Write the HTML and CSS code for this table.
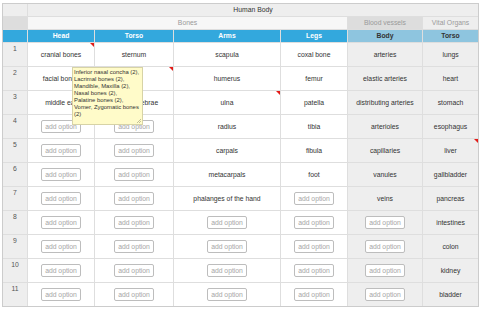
FILE: index.html
```html
<!DOCTYPE html>
<html lang="en">
<head>
  <meta charset="UTF-8" />
  <title>Human Body</title>
  <link rel="stylesheet" href="styles.css">
</head>
<body>
  <div class="sheet">
    <div class="cell top"></div>
    <div class="cell top title">Human Body</div>

    <div class="cell corner"></div>
    <div class="cell group bones">Bones</div>
    <div class="cell group vessels">Blood vessels</div>
    <div class="cell group organs">Vital Organs</div>

    <div class="cell blue"></div>
    <div class="cell blue">Head</div>
    <div class="cell blue">Torso</div>
    <div class="cell blue">Arms</div>
    <div class="cell blue">Legs</div>
    <div class="cell pale">Body</div>
    <div class="cell pale">Torso</div>

    <div class="rh">1</div>
    <div class="cell note">cranial bones</div>
    <div class="cell">sternum</div>
    <div class="cell">scapula</div>
    <div class="cell">coxal bone</div>
    <div class="cell grey">arteries</div>
    <div class="cell grey">lungs</div>

    <div class="rh">2</div>
    <div class="cell">facial bones</div>
    <div class="cell note">ribs</div>
    <div class="cell">humerus</div>
    <div class="cell">femur</div>
    <div class="cell grey">elastic arteries</div>
    <div class="cell grey">heart</div>

    <div class="rh">3</div>
    <div class="cell">middle ear</div>
    <div class="cell">spinal vertebrae</div>
    <div class="cell note">ulna</div>
    <div class="cell">patella</div>
    <div class="cell grey">distributing arteries</div>
    <div class="cell grey">stomach</div>

    <div class="rh">4</div>
    <div class="cell"><span class="add">add option</span></div>
    <div class="cell"><span class="add">add option</span></div>
    <div class="cell">radius</div>
    <div class="cell">tibia</div>
    <div class="cell grey">arterioles</div>
    <div class="cell grey">esophagus</div>

    <div class="rh">5</div>
    <div class="cell"><span class="add">add option</span></div>
    <div class="cell"><span class="add">add option</span></div>
    <div class="cell">carpals</div>
    <div class="cell">fibula</div>
    <div class="cell grey">capillaries</div>
    <div class="cell grey note">liver</div>

    <div class="rh">6</div>
    <div class="cell"><span class="add">add option</span></div>
    <div class="cell"><span class="add">add option</span></div>
    <div class="cell">metacarpals</div>
    <div class="cell">foot</div>
    <div class="cell grey">vanules</div>
    <div class="cell grey">gallbladder</div>

    <div class="rh">7</div>
    <div class="cell"><span class="add">add option</span></div>
    <div class="cell"><span class="add">add option</span></div>
    <div class="cell">phalanges of the hand</div>
    <div class="cell"><span class="add">add option</span></div>
    <div class="cell grey">veins</div>
    <div class="cell grey">pancreas</div>

    <div class="rh">8</div>
    <div class="cell"><span class="add">add option</span></div>
    <div class="cell"><span class="add">add option</span></div>
    <div class="cell"><span class="add">add option</span></div>
    <div class="cell"><span class="add">add option</span></div>
    <div class="cell grey"><span class="add">add option</span></div>
    <div class="cell grey">intestines</div>

    <div class="rh">9</div>
    <div class="cell"><span class="add">add option</span></div>
    <div class="cell"><span class="add">add option</span></div>
    <div class="cell"><span class="add">add option</span></div>
    <div class="cell"><span class="add">add option</span></div>
    <div class="cell grey"><span class="add">add option</span></div>
    <div class="cell grey">colon</div>

    <div class="rh">10</div>
    <div class="cell"><span class="add">add option</span></div>
    <div class="cell"><span class="add">add option</span></div>
    <div class="cell"><span class="add">add option</span></div>
    <div class="cell"><span class="add">add option</span></div>
    <div class="cell grey"><span class="add">add option</span></div>
    <div class="cell grey">kidney</div>

    <div class="rh">11</div>
    <div class="cell"><span class="add">add option</span></div>
    <div class="cell"><span class="add">add option</span></div>
    <div class="cell"><span class="add">add option</span></div>
    <div class="cell"><span class="add">add option</span></div>
    <div class="cell grey"><span class="add">add option</span></div>
    <div class="cell grey">bladder</div>

    <div class="comment">
      Inferior nasal concha (2),<br>
      Lacrimal bones (2),<br>
      Mandible, Maxilla (2),<br>
      Nasal bones (2),<br>
      Palatine bones (2),<br>
      Vomer, Zygomatic bones<br>
      (2)
      <svg class="grip" width="5" height="5" viewBox="0 0 5 5">
        <path d="M1 5 L5 1 M3 5 L5 3" stroke="#b5b18a" stroke-width="0.8" fill="none"/>
      </svg>
    </div>
  </div>
</body>
</html>
```

FILE: styles.css
```css
body {
  margin: 3px 0 0 2px;
  font-family: "Liberation Sans", Arial, sans-serif;
  font-size: 6.8px;
  color: #333;
  background: #fff;
}
.sheet {
  position: relative;
  display: grid;
  grid-template-columns: 24px 66px 78px 106px 66px 74px 55px;
  grid-template-rows: repeat(3, 12px) repeat(11, 23px);
  gap: 1px;
  width: max-content;
  background: #dedede;
  border: 1px solid #ccc;
}
.cell {
  position: relative;
  display: flex;
  align-items: center;
  justify-content: center;
  background: #fff;
  white-space: nowrap;
  line-height: 8px;
}
.top {
  background: #eee;
}
.title {
  grid-column: 2 / -1;
}
.corner {
  background: #ddd;
}
.group {
  color: #9a9a9a;
}
.bones {
  grid-column: 2 / 6;
  background: #f7f7f7;
}
.vessels {
  background: #ddd;
}
.organs {
  background: #eee;
}
.blue {
  background: #33a8dd;
  color: #fff;
  font-weight: bold;
}
.pale {
  background: #8ec5df;
  color: #333;
  font-weight: bold;
}
.grey {
  background: #eee;
}
.rh {
  background: #eee;
  color: #555;
  text-align: center;
  padding-top: 2px;
  line-height: 8px;
}
.note::after {
  content: '';
  position: absolute;
  top: 0;
  right: 0;
  border-left: 4px solid transparent;
  border-top: 4px solid #e41b17;
}
.add {
  display: flex;
  align-items: center;
  justify-content: center;
  width: 40px;
  height: 13px;
  box-sizing: border-box;
  border: 1px solid #bdbdbd;
  border-radius: 2px;
  background: #fff;
  color: #a6a6a6;
}
.comment {
  position: absolute;
  left: 69px;
  top: 63px;
  width: 71px;
  height: 58px;
  box-sizing: border-box;
  padding: 1px 1px;
  background: #fffbc9;
  border: 1px solid #d7d3a6;
  font-size: 5.9px;
  line-height: 7px;
  color: #333;
  white-space: nowrap;
}
.grip {
  position: absolute;
  right: 1px;
  bottom: 1px;
}
```
